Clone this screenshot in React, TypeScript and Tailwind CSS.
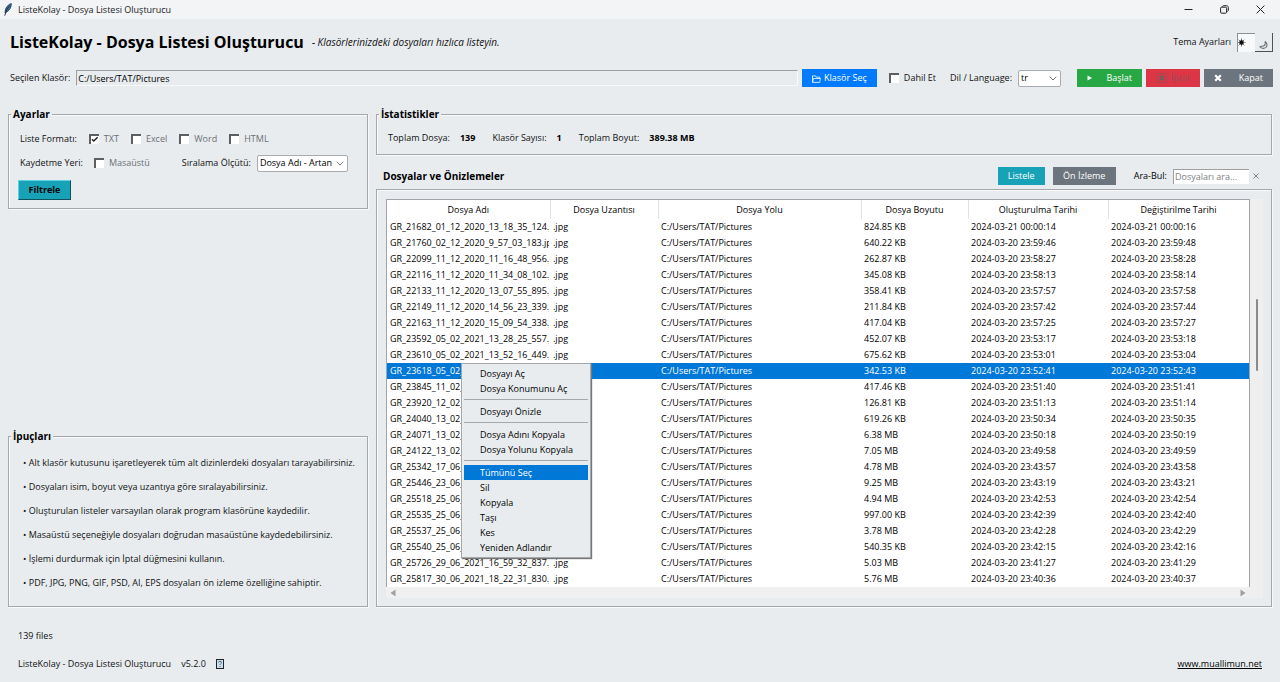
import type { ReactNode } from 'react';
import clsx from 'clsx';

type FileRow = [name: string, size: string, created: string, modified: string];

const FILES: FileRow[] = [
  ['GR_21682_01_12_2020_13_18_35_124.jpg', '824.85 KB', '2024-03-21 00:00:14', '2024-03-21 00:00:16'],
  ['GR_21760_02_12_2020_9_57_03_183.jpg', '640.22 KB', '2024-03-20 23:59:46', '2024-03-20 23:59:48'],
  ['GR_22099_11_12_2020_11_16_48_956.jpg', '262.87 KB', '2024-03-20 23:58:27', '2024-03-20 23:58:28'],
  ['GR_22116_11_12_2020_11_34_08_102.jpg', '345.08 KB', '2024-03-20 23:58:13', '2024-03-20 23:58:14'],
  ['GR_22133_11_12_2020_13_07_55_895.jpg', '358.41 KB', '2024-03-20 23:57:57', '2024-03-20 23:57:58'],
  ['GR_22149_11_12_2020_14_56_23_339.jpg', '211.84 KB', '2024-03-20 23:57:42', '2024-03-20 23:57:44'],
  ['GR_22163_11_12_2020_15_09_54_338.jpg', '417.04 KB', '2024-03-20 23:57:25', '2024-03-20 23:57:27'],
  ['GR_23592_05_02_2021_13_28_25_557.jpg', '452.07 KB', '2024-03-20 23:53:17', '2024-03-20 23:53:18'],
  ['GR_23610_05_02_2021_13_52_16_449.jpg', '675.62 KB', '2024-03-20 23:53:01', '2024-03-20 23:53:04'],
  ['GR_23618_05_02_2021_13_55_41_207.jpg', '342.53 KB', '2024-03-20 23:52:41', '2024-03-20 23:52:43'],
  ['GR_23845_11_02_2021_10_12_08_310.jpg', '417.46 KB', '2024-03-20 23:51:40', '2024-03-20 23:51:41'],
  ['GR_23920_12_02_2021_11_20_31_482.jpg', '126.81 KB', '2024-03-20 23:51:13', '2024-03-20 23:51:14'],
  ['GR_24040_13_02_2021_12_05_44_615.jpg', '619.26 KB', '2024-03-20 23:50:34', '2024-03-20 23:50:35'],
  ['GR_24071_13_02_2021_13_31_19_774.jpg', '6.38 MB', '2024-03-20 23:50:18', '2024-03-20 23:50:19'],
  ['GR_24122_13_02_2021_15_47_02_128.jpg', '7.05 MB', '2024-03-20 23:49:58', '2024-03-20 23:49:59'],
  ['GR_25342_17_06_2021_10_38_27_903.jpg', '4.78 MB', '2024-03-20 23:43:57', '2024-03-20 23:43:58'],
  ['GR_25446_23_06_2021_11_14_50_266.jpg', '9.25 MB', '2024-03-20 23:43:19', '2024-03-20 23:43:21'],
  ['GR_25518_25_06_2021_12_22_36_541.jpg', '4.94 MB', '2024-03-20 23:42:53', '2024-03-20 23:42:54'],
  ['GR_25535_25_06_2021_13_08_11_690.jpg', '997.00 KB', '2024-03-20 23:42:39', '2024-03-20 23:42:40'],
  ['GR_25537_25_06_2021_13_09_48_372.jpg', '3.78 MB', '2024-03-20 23:42:28', '2024-03-20 23:42:29'],
  ['GR_25540_25_06_2021_13_12_05_819.jpg', '540.35 KB', '2024-03-20 23:42:15', '2024-03-20 23:42:16'],
  ['GR_25726_29_06_2021_16_59_32_837.jpg', '5.03 MB', '2024-03-20 23:41:27', '2024-03-20 23:41:29'],
  ['GR_25817_30_06_2021_18_22_31_830.jpg', '5.76 MB', '2024-03-20 23:40:36', '2024-03-20 23:40:37'],
];

const SELECTED_ROW = 9;

const COLUMNS = ['Dosya Adı', 'Dosya Uzantısı', 'Dosya Yolu', 'Dosya Boyutu', 'Oluşturulma Tarihi', 'Değiştirilme Tarihi'];

const MENU_GROUPS = [
  ['Dosyayı Aç', 'Dosya Konumunu Aç'],
  ['Dosyayı Önizle'],
  ['Dosya Adını Kopyala', 'Dosya Yolunu Kopyala'],
  ['Tümünü Seç', 'Sil', 'Kopyala', 'Taşı', 'Kes', 'Yeniden Adlandır'],
];

const TIPS = [
  'Alt klasör kutusunu işaretleyerek tüm alt dizinlerdeki dosyaları tarayabilirsiniz.',
  'Dosyaları isim, boyut veya uzantıya göre sıralayabilirsiniz.',
  'Oluşturulan listeler varsayılan olarak program klasörüne kaydedilir.',
  'Masaüstü seçeneğiyle dosyaları doğrudan masaüstüne kaydedebilirsiniz.',
  'İşlemi durdurmak için İptal düğmesini kullanın.',
  'PDF, JPG, PNG, GIF, PSD, AI, EPS dosyaları ön izleme özelliğine sahiptir.',
];

const GROOVE = 'border border-[#a5a8aa] shadow-[1px_1px_0_#f8f9fa,inset_1px_1px_0_#f8f9fa]';

const Group = ({ title, className, children }: { title: string; className?: string; children: ReactNode }) => (
  <fieldset className={clsx('min-w-0', GROOVE, className)}>
    <legend className="ml-[2px] bg-[#e8ecef] px-[2px] text-[10px] leading-3 font-bold text-black">{title}</legend>
    {children}
  </fieldset>
);

const Check = ({ label, checked, muted }: { label: string; checked?: boolean; muted?: boolean }) => (
  <label className="flex items-center gap-[5px] whitespace-nowrap">
    <span className="grid">
      <input
        type="checkbox"
        defaultChecked={checked}
        className="peer col-start-1 row-start-1 size-[10px] appearance-none border-t-2 border-l-2 border-t-[#5c5e60] border-l-[#5c5e60] bg-white"
      />
      <svg viewBox="0 0 10 10" className="pointer-events-none invisible col-start-1 row-start-1 size-[10px] peer-checked:visible">
        <path d="M3 5.2 4.8 7 8.6 3.2" fill="none" stroke="#222" strokeWidth="1.5" />
      </svg>
    </span>
    <span className={muted ? 'text-[#6c7075]' : undefined}>{label}</span>
  </label>
);

const Select = ({ id, value, className }: { id: string; value: string; className: string }) => (
  <span className={clsx('grid items-center', className)}>
    <select
      id={id}
      defaultValue={value}
      className="col-start-1 row-start-1 h-[17px] w-full appearance-none rounded-[2px] border border-[#a9adb0] bg-white pr-3 pl-[2px] leading-3 text-black"
    >
      <option>{value}</option>
    </select>
    <svg viewBox="0 0 8 5" className="pointer-events-none col-start-1 row-start-1 mr-1 h-[5px] w-2 justify-self-end">
      <path d="M.7.7 4 4 7.3.7" fill="none" stroke="#777" />
    </svg>
  </span>
);

const TitleBar = () => (
  <div className="flex h-[19px] items-center bg-[#f2f4f6] pr-[2px] pl-1 text-[#222]">
    <svg viewBox="0 0 8 13" className="h-[13px] w-2">
      <path d="M7.3.4C4.2 1.6 1.3 4.3 1.2 8.2l-.3 1.3 1.5-.3C5.4 7.6 7.6 4 7.3.4Z" fill="#3f74ad" stroke="#1b2a3c" strokeWidth=".7" />
      <path d="M6 2.4C3.8 4.6 2 7.6.8 12.6" fill="none" stroke="#16202c" strokeWidth=".9" />
    </svg>
    <span className="ml-[6px] flex-1">ListeKolay - Dosya Listesi Oluşturucu</span>
    <div className="flex">
      <button aria-label="Simge durumuna küçült" className="flex h-[19px] w-9 items-center justify-center">
        <svg viewBox="0 0 9 9" className="size-[9px]"><path d="M.5 4.500h8" stroke="#222" /></svg>
      </button>
      <button aria-label="Önceki boyut" className="flex h-[19px] w-9 items-center justify-center">
        <svg viewBox="0 0 9 9" className="size-[9px]" fill="none" stroke="#222">
          <rect x=".6" y="2.2" width="6" height="6" rx="1" />
          <path d="M2.4 1.6c.2-.6.6-.9 1.2-.9h2.9c1.1 0 1.8.7 1.8 1.8v2.8c0 .6-.3 1-.8 1.2" />
        </svg>
      </button>
      <button aria-label="Pencereyi kapat" className="flex h-[19px] w-9 items-center justify-center">
        <svg viewBox="0 0 9 9" className="size-[9px]"><path d="m.6.6 7.8 7.8m0-7.8L.6 8.4" stroke="#222" /></svg>
      </button>
    </div>
  </div>
);

const Header = () => (
  <header className="flex h-[46px] items-center pr-[7px] pl-[10px]">
    <h1 className="text-[16px] font-bold text-black">ListeKolay - Dosya Listesi Oluşturucu</h1>
    <p className="ml-2 flex-1 text-[10px] italic">- Klasörlerinizdeki dosyaları hızlıca listeyin.</p>
    <span className="mr-[6px]">Tema Ayarları</span>
    <button aria-label="Açık tema" className="flex h-[19px] w-[18px] items-center border-t border-l border-[#8e9194] bg-[#f8f9fa]">
      <svg viewBox="0 0 9 9" className="size-[9px]" stroke="#111" strokeWidth=".6">
        <circle cx="3.500" cy="4.500" r="2" fill="#111" />
        <path d="M3.500.5v8M.7 1.700l5.600 5.600M6.300 1.700.7 7.300M6.300 4.500h1.200M0 4.500h1" />
      </svg>
    </button>
    <button aria-label="Koyu tema" className="flex h-[19px] w-[18px] items-end justify-center border-r border-b border-[#4e5256] bg-[#e8ecef] pb-[2px]">
      <svg viewBox="0 0 9 8" className="h-2 w-[9px]" fill="none" stroke="#6a6e72" strokeWidth="1.1">
        <path d="M6 .6c2.4 1.4 2.7 4.4.6 6-1.9 1.3-4.6.8-5.9-1.1" />
        <path d="M6 .6c.6 2-.2 4-1.8 4.5C3 5.5 1.700 5.600.7 5.500" />
      </svg>
    </button>
  </header>
);

const Toolbar = () => (
  <div className="flex items-center pt-1 pr-[7px] pl-[10px] whitespace-nowrap">
    <label htmlFor="folder">Seçilen Klasör:</label>
    <input
      id="folder"
      readOnly
      value="C:/Users/TAT/Pictures"
      className="ml-[6px] h-4 min-w-0 flex-1 border border-t-[#9da0a3] border-r-[#f8f9fa] border-b-[#f8f9fa] border-l-[#9da0a3] bg-[#e8ecef] px-px text-black"
    />
    <button className="ml-1 flex h-[18px] w-[75px] items-center justify-center gap-[3px] bg-[#007bff] text-white">
      <svg viewBox="0 0 9 8" className="mt-[2px] h-2 w-[9px]" fill="none" stroke="#fff" strokeWidth=".8">
        <path d="M.5 7.4V.9h3l.9 1.300h3.400v1.300M.5 7.400h7.200l.7-3.900H1.500L.5 7.400" />
      </svg>
      Klasör Seç
    </button>
    <div className="ml-3"><Check label="Dahil Et" /></div>
    <label htmlFor="lang" className="mr-[6px] ml-[14px]">Dil / Language:</label>
    <Select id="lang" value="tr" className="w-[43px]" />
    <div className="ml-4 flex gap-1">
      <button className="flex h-[18px] w-[65px] items-center justify-between bg-[#28a745] pr-[10px] pl-[10px] text-white">
        <svg viewBox="0 0 6 6" className="size-[6px]"><path d="M.5 .6 5 3 .5 5.400Z" fill="#fff" /></svg>
        Başlat
      </button>
      <button disabled className="flex h-[18px] w-[54px] items-center justify-center gap-1 bg-[#dc3545] text-[#96505a]">
        <svg viewBox="0 0 10 10" className="size-[10px]">
          <rect x=".5" y=".5" width="9" height="9" rx="1" fill="none" stroke="#a34850" />
          <rect x="2.500" y="2.500" width="5" height="5" fill="#85555a" />
        </svg>
        İptal
      </button>
      <button className="flex h-[18px] w-[69px] items-center justify-between bg-[#6c757d] px-[10px] text-white">
        <svg viewBox="0 0 8 8" className="size-2"><path d="m1.200 1.200 5.600 5.600m0-5.600L1.200 6.800" stroke="#fff" strokeWidth="2.200" /></svg>
        Kapat
      </button>
    </div>
  </div>
);

const Settings = () => (
  <Group title="Ayarlar" className="pt-[7px] pb-2">
    <div className="flex h-6 items-center gap-3 pl-[11px]">
      <span>Liste Formatı:</span>
      <Check label="TXT" checked muted />
      <Check label="Excel" muted />
      <Check label="Word" muted />
      <Check label="HTML" muted />
    </div>
    <div className="flex h-6 items-center pl-[11px]">
      <span className="mr-[11px]">Kaydetme Yeri:</span>
      <Check label="Masaüstü" muted />
      <label htmlFor="sort" className="mr-[6px] ml-8">Sıralama Ölçütü:</label>
      <Select id="sort" value="Dosya Adı - Artan" className="w-[91px]" />
    </div>
    <button className="mt-[5px] ml-[9px] block h-5 w-[53px] border border-t-[#5fd0e0] border-r-[#0d525c] border-b-[#0d525c] border-l-[#5fd0e0] bg-[#17a2b8] font-bold text-black">
      Filtrele
    </button>
  </Group>
);

const Tips = () => (
  <Group title="İpuçları" className="pt-[9px] pb-[11px]">
    <ul className="pl-[14px] leading-6">
      {TIPS.map((tip) => (
        <li key={tip} className="whitespace-nowrap">• {tip}</li>
      ))}
    </ul>
  </Group>
);

const Stat = ({ label, value }: { label: string; value: string }) => (
  <div className="flex gap-[10px]">
    <dt>{label}</dt>
    <dd className="font-bold text-black">{value}</dd>
  </div>
);

const ContextMenu = () => (
  <div
    role="menu"
    className="absolute top-[164px] left-[75px] w-[130px] border border-[#a5a8aa] bg-[#e8ecef] p-[2px] shadow-[1px_1px_1px_#777]"
  >
    {MENU_GROUPS.map((items, i) => (
      <div key={items[0]} className={clsx(i > 0 && 'mt-[3px] border-t border-[#a5a8aa] pt-1')}>
        {items.map((item) => (
          <button
            key={item}
            role="menuitem"
            className={clsx(
              'block h-[15px] w-full pl-4 text-left leading-[15px] whitespace-nowrap',
              item === 'Tümünü Seç' ? 'bg-[#0078d7] text-white' : 'text-black',
            )}
          >
            {item}
          </button>
        ))}
      </div>
    ))}
  </div>
);

const FileTable = () => (
  <div className={clsx('mt-1 flex pt-[9px] pr-2 pb-2 pl-[9px]', GROOVE)}>
    <div className="relative min-w-0 flex-1">
      <div className="overflow-hidden border-x border-t border-[#a0a4ab] bg-white">
        <table className="w-full table-fixed border-collapse text-black">
          <colgroup>
            <col className="w-[163px]" />
            <col className="w-[108px]" />
            <col className="w-[203px]" />
            <col className="w-[107px]" />
            <col className="w-[140px]" />
            <col className="w-[141px]" />
          </colgroup>
          <thead>
            <tr className="h-[19px]">
              {COLUMNS.map((column) => (
                <th key={column} className="border-r border-[#e2e2e2] p-0 text-center font-normal">{column}</th>
              ))}
            </tr>
          </thead>
          <tbody>
            {FILES.map(([name, size, created, modified], i) => (
              <tr key={name} className={clsx('h-4', i === SELECTED_ROW && 'bg-[#0078d7] text-white')}>
                {[name, '.jpg', 'C:/Users/TAT/Pictures', size, created, modified].map((value, j) => (
                  <td key={j} className="py-0 pr-px pl-[3px]">
                    <div className="overflow-hidden leading-4 whitespace-nowrap">{value}</div>
                  </td>
                ))}
              </tr>
            ))}
          </tbody>
        </table>
      </div>
      <div className="flex h-[11px] items-center justify-between bg-[#f0f0f0] px-1">
        <svg viewBox="0 0 6 8" className="h-2 w-[6px]"><path d="M5.500.5v7L.5 4Z" fill="#a0a0a0" /></svg>
        <svg viewBox="0 0 6 8" className="h-2 w-[6px]"><path d="M.5.5v7l5-3.500Z" fill="#a0a0a0" /></svg>
      </div>
      <ContextMenu />
    </div>
    <div className="w-[13px] bg-[#efefef]">
      <div className="mx-auto mt-[100px] h-[72px] w-[2px] rounded-full bg-[#8a8a8a]" />
    </div>
  </div>
);

const Footer = () => (
  <footer className="mt-[15px] px-[18px]">
    <p className="leading-7">139 files</p>
    <div className="flex items-center leading-7">
      <span>ListeKolay - Dosya Listesi Oluşturucu</span>
      <span className="ml-[10px]">v5.2.0</span>
      <svg viewBox="0 0 8 10" className="ml-[10px] h-[10px] w-2" fill="none">
        <rect x=".5" y=".5" width="7" height="9" fill="#cfe0ec" stroke="#222" />
        <path d="M2.600 3.600c0-1.800 2.900-1.800 2.900 0 0 1.100-1.500 1.100-1.500 2.300M4 7v1" stroke="#2a5f8a" strokeWidth=".9" />
      </svg>
      <a href="https://www.muallimun.net" className="ml-auto text-black underline">www.muallimun.net</a>
    </div>
  </footer>
);

export default function App() {
  return (
    <div className="min-h-screen bg-[#e8ecef] font-['Open_Sans','Noto_Sans',sans-serif] text-[9px] leading-3 text-[#111]">
      <TitleBar />
      <Header />
      <Toolbar />
      <main className="mt-[21px] grid grid-cols-[360px_minmax(0,1fr)] gap-2 px-2">
        <div className="flex flex-col justify-between">
          <Settings />
          <Tips />
        </div>
        <div>
          <Group title="İstatistikler" className="pt-[6px] pb-1">
            <dl className="flex h-6 items-center gap-[17px] pl-[11px]">
              <Stat label="Toplam Dosya:" value="139" />
              <Stat label="Klasör Sayısı:" value="1" />
              <Stat label="Toplam Boyut:" value="389.38 MB" />
            </dl>
          </Group>
          <div className="mt-3 flex items-center pl-[7px] whitespace-nowrap">
            <h2 className="flex-1 text-[10px] font-bold text-black">Dosyalar ve Önizlemeler</h2>
            <button className="h-[18px] w-[47px] bg-[#17a2b8] text-white">Listele</button>
            <button className="ml-2 h-[18px] w-[63px] bg-[#6c757d] text-white">Ön İzleme</button>
            <label htmlFor="search" className="mr-[6px] ml-[18px] text-black">Ara-Bul:</label>
            <input
              id="search"
              placeholder="Dosyaları ara..."
              className="h-[15px] w-[76px] border-t border-l border-[#a0a0a0] bg-white px-px placeholder:text-[#808080]"
            />
            <button aria-label="Aramayı temizle" className="mr-[13px] ml-1 flex w-[6px]">
              <svg viewBox="0 0 6 6" className="size-[6px]"><path d="m.5.5 5 5m0-5-5 5" stroke="#777" strokeWidth=".9" /></svg>
            </button>
          </div>
          <FileTable />
        </div>
      </main>
      <Footer />
    </div>
  );
}
